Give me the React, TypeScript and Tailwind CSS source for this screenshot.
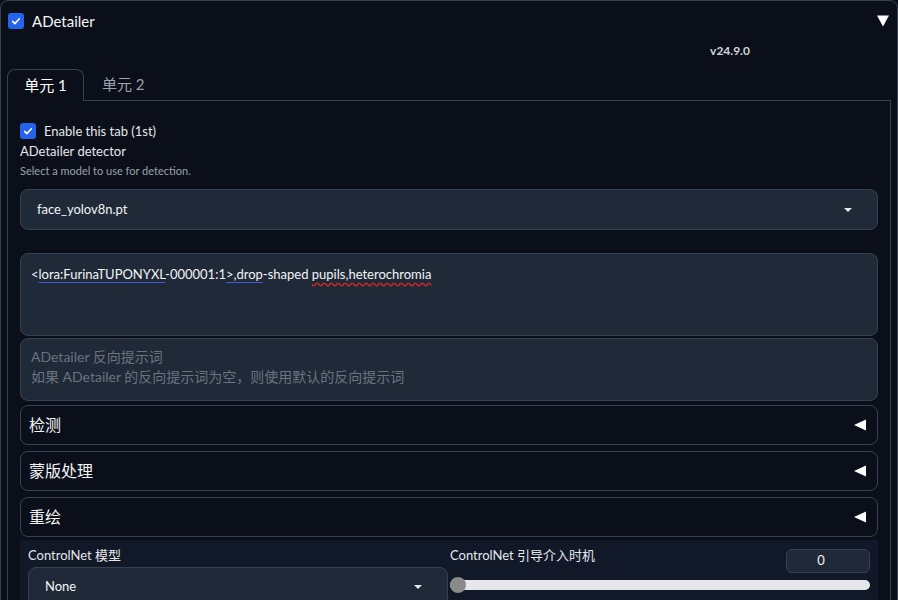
import React from 'react';

const font = { fontFamily: 'Lato, "Noto Sans CJK SC", sans-serif' };

function Check({ className = '' }: { className?: string }) {
  return (
    <span className={`flex h-4 w-4 shrink-0 items-center justify-center rounded-[3px] bg-[#2563eb] ${className}`}>
      <svg viewBox="0 0 16 16" className="h-3 w-3" fill="none">
        <path d="M3.5 8.5l3 3 6-6.5" stroke="white" strokeWidth="2" strokeLinecap="round" strokeLinejoin="round" />
      </svg>
    </span>
  );
}

function TriLeft() {
  return (
    <svg viewBox="0 0 12 12" className="h-3 w-3">
      <path d="M0 6L12 0.5V11.5Z" fill="white" />
    </svg>
  );
}

function Caret() {
  return (
    <svg viewBox="0 0 8 4" className="h-[4px] w-[8px]">
      <path d="M0 0H8L4 4Z" fill="#e5e7eb" />
    </svg>
  );
}

function Accordion({ label }: { label: string }) {
  return (
    <div className="flex h-[40px] items-center justify-between rounded-lg border border-[#374151] pl-2 pr-[11px]">
      <span className="text-[16px] text-[#f3f4f6]">{label}</span>
      <TriLeft />
    </div>
  );
}

export default function App() {
  return (
    <div className="min-h-[600px] overflow-hidden bg-[#0b0f19] text-[#e5e7eb]" style={font}>
      <div className="rounded-lg border border-[#374151]">
        {/* header */}
        <div className="flex items-center justify-between pl-[7px] pr-[8px] pt-[9px]">
          <div className="flex items-center gap-2">
            <Check />
            <span className="text-[15px] text-[#f3f4f6]">ADetailer</span>
          </div>
          <svg viewBox="0 0 12 12" className="h-3 w-3">
            <path d="M0 0.5H12L6 11.5Z" fill="white" />
          </svg>
        </div>
        <div className="grid grid-cols-[1fr_334px] pt-[9px]">
          <div />
          <div className="text-center text-[12px] font-bold text-[#d1d5db]">v24.9.0</div>
        </div>

        {/* tabs */}
        <div className="mt-[9px] px-[6px]">
          <div className="flex items-end">
            <div className="flex h-[32px] w-[77px] items-center justify-center rounded-t-lg border border-b-0 border-[#374151] text-[15px] text-white">
              单元 1
            </div>
            <div className="flex h-[32px] flex-1 items-center border-b border-[#374151] pl-[18px] text-[15px] text-[#9ca3af]">
              单元 2
            </div>
          </div>

          <div className="border-x border-[#374151] px-[12px] pb-4 pt-[21px]">
            <div className="flex items-center gap-2">
              <Check />
              <span className="text-[13px] text-[#e5e7eb]">Enable this tab (1st)</span>
            </div>
            <div className="mt-[1px] text-[13px] text-[#e5e7eb]">ADetailer detector</div>
            <div className="mt-[1px] text-[11px] text-[#9ca3af]">Select a model to use for detection.</div>

            <div className="mt-[10px] flex h-[41px] items-center justify-between rounded-lg border border-[#374151] bg-[#1f2937] pl-4 pr-[25px]">
              <span className="text-[13px] text-[#f3f4f6]">face_yolov8n.pt</span>
              <Caret />
            </div>

            <div className="mt-[23px] h-[83px] rounded-lg border border-[#374151] bg-[#1f2937] px-[10px] pt-[11px] text-[13px] text-[#f3f4f6]">
              &lt;
              <span className="underline decoration-[#3b5bdb] underline-offset-[3px]">lora:FurinaTUPONYXL</span>
              -000001:1
              <span className="underline decoration-[#3b5bdb] underline-offset-[3px]">&gt;,drop</span>
              -shaped{' '}
              <span className="underline decoration-[#dc2626] decoration-wavy underline-offset-[3px]">pupils,heterochromia</span>
            </div>

            <div className="mt-[2px] h-[63px] rounded-lg border border-[#374151] bg-[#1f2937] px-[10px] pt-[8px] text-[14px] leading-[20px] text-[#6b7280]">
              <div>ADetailer 反向提示词</div>
              <div>如果 ADetailer 的反向提示词为空，则使用默认的反向提示词</div>
            </div>

            <div className="mt-[4px] flex flex-col gap-[6px]">
              <Accordion label="检测" />
              <Accordion label="蒙版处理" />
              <Accordion label="重绘" />
            </div>

            <div className="mt-[3px] grid grid-cols-2 gap-[2px] bg-[#111827] px-2 pt-[6px]">
              <div>
                <div className="text-[13px] text-[#e5e7eb]">ControlNet 模型</div>
                <div className="mt-[1px] flex h-[40px] items-center justify-between rounded-lg border border-[#374151] bg-[#1f2937] pl-[16px] pr-[25px]">
                  <span className="text-[13px] text-[#f3f4f6]">None</span>
                  <Caret />
                </div>
              </div>
              <div>
                <div className="flex items-start justify-between">
                  <span className="text-[13px] text-[#e5e7eb]">ControlNet 引导介入时机</span>
                  <div className="mt-[3px] flex h-[24px] w-[84px] items-center justify-center rounded-md border border-[#374151] bg-[#1f2937] pr-[14px] text-[13px] text-[#f3f4f6]">
                    0
                  </div>
                </div>
                <div className="relative mt-[7px] h-[10px] rounded-full bg-[#e5e7eb]">
                  <span className="absolute -top-[3px] left-0 h-4 w-4 rounded-full bg-[#8a8a8a]" />
                </div>
                <div className="mt-[10px] flex justify-end pr-[4px]">
                  <div className="h-[24px] w-[80px] rounded-md border border-[#374151] bg-[#1f2937]" />
                </div>
              </div>
            </div>
          </div>
        </div>
      </div>
    </div>
  );
}
